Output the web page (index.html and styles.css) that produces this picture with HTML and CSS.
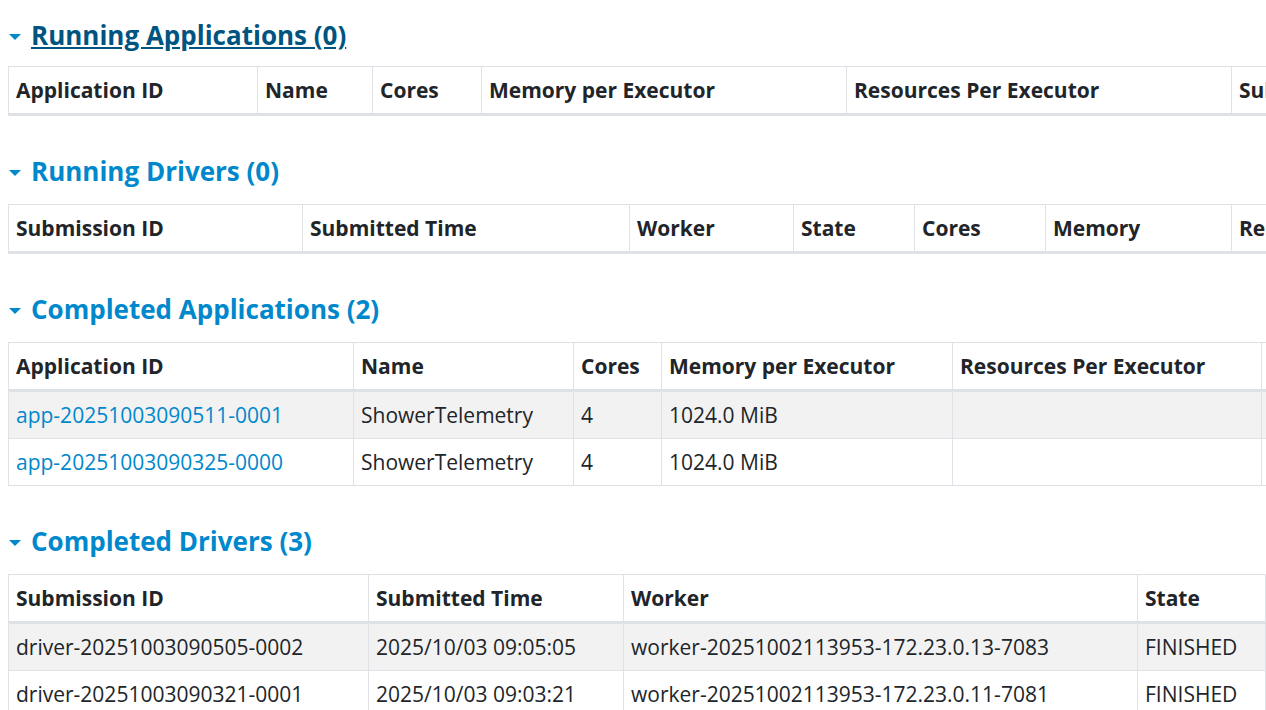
FILE: index.html
```html
<!DOCTYPE html>
<html>
<head>
<meta charset="utf-8">
<link rel="stylesheet" href="styles.css">
</head>
<body>
<div class="page">
  <h4 class="section-title first hovered"><span class="arrow"></span><a>Running Applications (0)</a></h4>
  <table class="grid t1">
    <colgroup><col style="width:249px"><col style="width:115px"><col style="width:109px"><col style="width:365px"><col style="width:385px"><col style="width:200px"></colgroup>
    <thead><tr><th>Application ID</th><th>Name</th><th>Cores</th><th>Memory per Executor</th><th>Resources Per Executor</th><th>Submitted Time</th></tr></thead>
    <tbody></tbody>
  </table>

  <h4 class="section-title"><span class="arrow"></span><a>Running Drivers (0)</a></h4>
  <table class="grid t2">
    <colgroup><col style="width:294px"><col style="width:327px"><col style="width:164px"><col style="width:121px"><col style="width:131px"><col style="width:186px"><col style="width:200px"></colgroup>
    <thead><tr><th>Submission ID</th><th>Submitted Time</th><th>Worker</th><th>State</th><th>Cores</th><th>Memory</th><th>Resources</th></tr></thead>
    <tbody></tbody>
  </table>

  <h4 class="section-title"><span class="arrow"></span><a>Completed Applications (2)</a></h4>
  <table class="grid t3">
    <colgroup><col style="width:345px"><col style="width:220px"><col style="width:88px"><col style="width:291px"><col style="width:309px"><col style="width:200px"></colgroup>
    <thead><tr><th>Application ID</th><th>Name</th><th>Cores</th><th>Memory per Executor</th><th>Resources Per Executor</th><th>Submitted Time</th></tr></thead>
    <tbody>
      <tr><td><a class="link">app-20251003090511-0001</a></td><td>ShowerTelemetry</td><td>4</td><td>1024.0 MiB</td><td></td><td>2025/10/03 09:05:11</td></tr>
      <tr><td><a class="link">app-20251003090325-0000</a></td><td>ShowerTelemetry</td><td>4</td><td>1024.0 MiB</td><td></td><td>2025/10/03 09:03:25</td></tr>
    </tbody>
  </table>

  <h4 class="section-title"><span class="arrow"></span><a>Completed Drivers (3)</a></h4>
  <table class="grid t4">
    <colgroup><col style="width:360px"><col style="width:255px"><col style="width:514px"><col style="width:128px"><col style="width:200px"></colgroup>
    <thead><tr><th>Submission ID</th><th>Submitted Time</th><th>Worker</th><th>State</th><th>Cores</th></tr></thead>
    <tbody>
      <tr><td>driver-20251003090505-0002</td><td>2025/10/03 09:05:05</td><td>worker-20251002113953-172.23.0.13-7083</td><td>FINISHED</td><td>1</td></tr>
      <tr><td>driver-20251003090321-0001</td><td>2025/10/03 09:03:21</td><td>worker-20251002113953-172.23.0.11-7081</td><td>FINISHED</td><td>1</td></tr>
      <tr><td>driver-20251003090101-0000</td><td>2025/10/03 09:01:01</td><td>worker-20251002113953-172.23.0.12-7082</td><td>FINISHED</td><td>1</td></tr>
    </tbody>
  </table>
</div>
</body>
</html>
```
FILE: styles.css
```css
html, body {
  margin: 0;
  padding: 0;
  overflow: hidden;
  background: #ffffff;
}
body {
  font-family: "Open Sans", "Noto Sans", "DejaVu Sans", sans-serif;
  font-size: 21px;
  color: #212529;
}
.page {
  padding: 20px 0 0 8px;
  width: 2000px;
}
.section-title {
  margin: 0 0 17px 0;
  font-size: 26px;
  font-weight: 700;
  line-height: 31px;
  height: 31px;
  display: flex;
  align-items: center;
  color: #0088cc;
}
.section-title.first {
  margin-bottom: 15px;
}
.section-title a {
  color: #0088cc;
}
.section-title.hovered a {
  color: #005580;
  text-decoration: underline;
}
.arrow {
  display: inline-block;
  width: 0;
  height: 0;
  margin: 2px 10px 0 1px;
  border-left: 6px solid transparent;
  border-right: 6px solid transparent;
  border-top: 6px solid #0088cc;
}
.grid {
  border-collapse: collapse;
  table-layout: fixed;
  margin-bottom: 40px;
}
.grid th, .grid td {
  border: 1px solid #dee2e6;
  padding: 8px 7px;
  line-height: 30px;
  text-align: left;
  white-space: nowrap;
  overflow: hidden;
}
.grid th {
  font-weight: 700;
  border-bottom: 3px solid #dee2e6;
}
.grid td {
  font-weight: 400;
}
.grid tbody tr:nth-child(odd) {
  background: #f2f2f2;
}
.link {
  color: #0088cc;
  text-decoration: none;
}
```
